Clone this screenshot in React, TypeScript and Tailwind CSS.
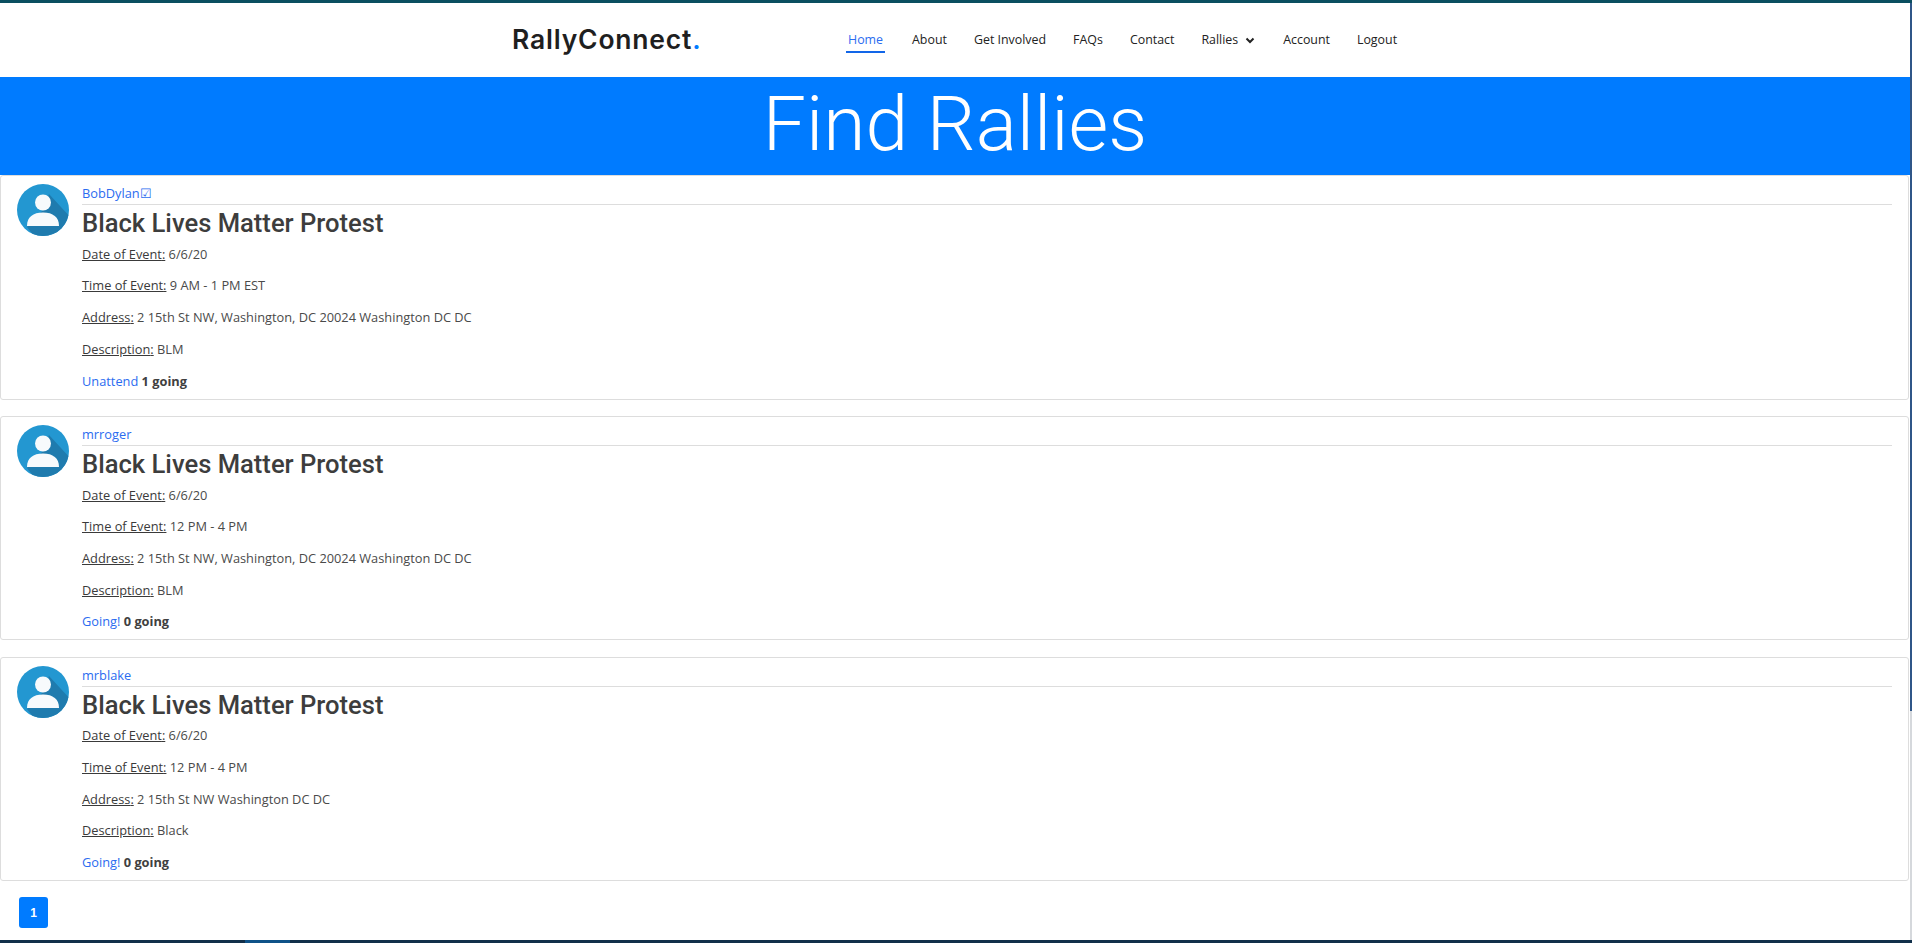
const openSans = { fontFamily: '"Open Sans", sans-serif' };

const rallies = [
  {
    user: 'BobDylan☑',
    time: '9 AM - 1 PM EST',
    address: '2 15th St NW, Washington, DC 20024 Washington DC DC',
    description: 'BLM',
    action: 'Unattend',
    going: '1 going',
  },
  {
    user: 'mrroger',
    time: '12 PM - 4 PM',
    address: '2 15th St NW, Washington, DC 20024 Washington DC DC',
    description: 'BLM',
    action: 'Going!',
    going: '0 going',
  },
  {
    user: 'mrblake',
    time: '12 PM - 4 PM',
    address: '2 15th St NW Washington DC DC',
    description: 'Black',
    action: 'Going!',
    going: '0 going',
  },
];

const navItems = ['About', 'Get Involved', 'FAQs', 'Contact'];

function Avatar() {
  return (
    <svg viewBox="0 0 52 52" className="w-[52px] h-[52px] shrink-0">
      <defs>
        <clipPath id="avatar-clip">
          <circle cx="26" cy="26" r="26" />
        </clipPath>
      </defs>
      <circle cx="26" cy="26" r="26" fill="#2397d1" />
      <g clipPath="url(#avatar-clip)">
        <path d="M32 10 L56 36 L56 56 L20 56 L10 43 L26 26 Z" fill="#1f7bae" />
      </g>
      <circle cx="26" cy="18.5" r="8" fill="#f7fafc" />
      <path d="M10 42 C10 33 16 28.5 26 28.5 C36 28.5 42 33 42 42 Z" fill="#f7fafc" />
    </svg>
  );
}

function Field({ label, value }: { label: string; value: string }) {
  return (
    <p className="h-[19px] mb-[12.7px] leading-[19px]">
      <span className="underline text-[#3a3a3a]">{label}:</span> {value}
    </p>
  );
}

function RallyCard({ rally }: { rally: (typeof rallies)[number] }) {
  return (
    <div className="flex border border-[#dddddd] rounded-[3px] pl-4 pr-4 pt-2 h-[224.5px] mb-[16.3px]">
      <Avatar />
      <div className="flex-1 pl-[13px]">
        <div className="h-[21px] border-b border-[#dddddd] leading-[19px] text-[#2b6cf0]">
          {rally.user}
        </div>
        <h2 className="text-[25.6px] leading-[34px] mt-px font-medium text-[#3d3d3d] mb-[4.8px]" style={{ fontFamily: 'Roboto, sans-serif' }}>
          Black Lives Matter Protest
        </h2>
        <Field label="Date of Event" value="6/6/20" />
        <Field label="Time of Event" value={rally.time} />
        <Field label="Address" value={rally.address} />
        <Field label="Description" value={rally.description} />
        <p className="leading-[19px]">
          <span className="text-[#2b6cf0]">{rally.action}</span>{' '}
          <span className="font-bold text-[#404040]">{rally.going}</span>
        </p>
      </div>
    </div>
  );
}

export default function App() {
  return (
    <div className="relative h-[943px] overflow-hidden bg-white text-[12.8px] text-[#4a4a4a]" style={openSans}>
      <div className="h-[3px] bg-[#0b4f60]" />
      <div className="pr-[2px]">
        <nav className="h-[74px] flex items-center pl-[512px]">
          <div className="w-[334px] text-[26.5px] font-semibold tracking-[0.8px] text-[#1f1f1f]" style={{ fontFamily: 'Inter, sans-serif' }}>
            RallyConnect<span className="text-[#007bff]">.</span>
          </div>
          <div className="flex items-center gap-[27px] text-[12.4px] font-medium text-[#222222]">
            <a className="px-[2px] py-[3px] leading-[16px] border-y-2 border-t-transparent border-b-[#1266e8] text-[#2b6cf0]">Home</a>
            {navItems.map((item) => (
              <a key={item}>{item}</a>
            ))}
            <a className="flex items-center gap-[6px]">
              Rallies
              <svg viewBox="0 0 12 12" className="w-3 h-3" fill="none" stroke="#222222" strokeWidth="2">
                <path d="M2.5 4.5 L6 8 L9.5 4.5" />
              </svg>
            </a>
            <a>Account</a>
            <a>Logout</a>
          </div>
        </nav>
        <header className="h-[98px] bg-[#007bff] text-center text-white text-[76.8px] font-light leading-[94px]" style={{ fontFamily: 'Roboto, sans-serif' }}>
          Find Rallies
        </header>
        <main className="pr-px">
          {rallies.map((rally, i) => (
            <RallyCard key={i} rally={rally} />
          ))}
        </main>
        <div className="pl-[19px] -mt-[0.4px]">
          <button className="w-[29px] h-[31px] rounded-[3px] bg-[#007bff] text-white text-[12px] font-bold" style={{ fontFamily: '"Liberation Sans", sans-serif' }}>
            1
          </button>
        </div>
      </div>
      {/* window scrollbar and the bottom edge of the capture */}
      <div className="absolute top-[3px] bottom-0 right-0 w-[2px] bg-[#d5d8dc]">
        <div className="h-[708px] bg-[#2f5688]" />
      </div>
      <div className="absolute bottom-0 left-0 right-0 h-[3px] bg-[#12304a]">
        <div className="ml-[245px] w-[45px] h-full bg-[#0f5288]" />
      </div>
    </div>
  );
}
